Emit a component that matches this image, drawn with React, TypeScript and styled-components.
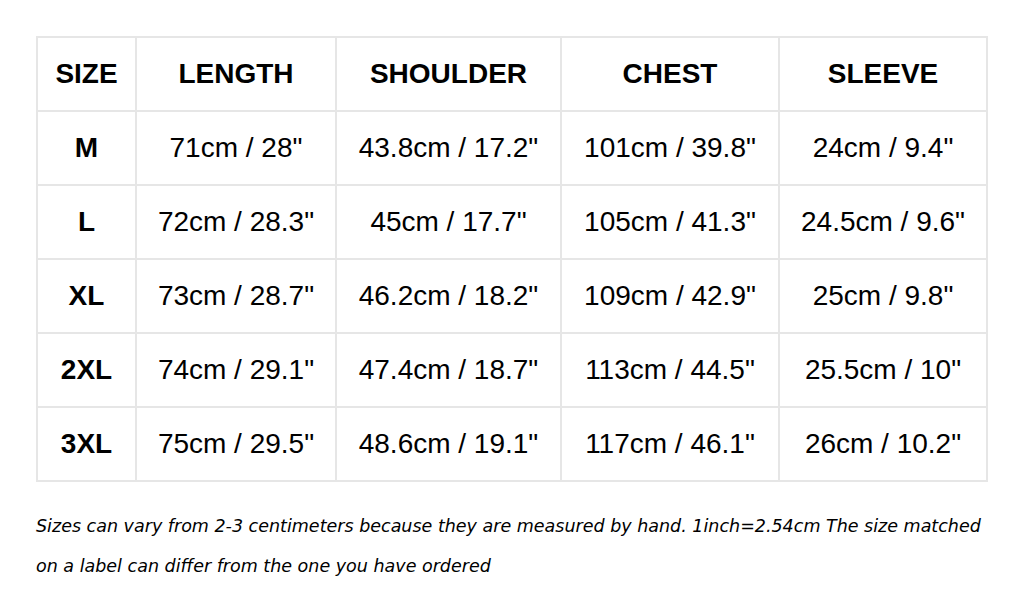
import styled, { createGlobalStyle } from "styled-components";

const GlobalStyle = createGlobalStyle`
  html, body {
    margin: 0;
    padding: 0;
    background: #fff;
  }
`;

const Page = styled.div`
  padding: 36px 34px 0 36px;
  width: 950px;
  font-family: "Liberation Sans", Arial, Helvetica, sans-serif;
  color: #000;
`;

const Table = styled.table`
  width: 950px;
  border-collapse: collapse;
  table-layout: fixed;
  border: 2px solid #e6e6e6;
`;

const Cell = styled.td<{ $head?: boolean }>`
  height: 72px;
  padding: 0;
  border: 2px solid #e6e6e6;
  text-align: center;
  vertical-align: middle;
  font-size: 28px;
  line-height: 32px;
  font-weight: ${({ $head }) => ($head ? 700 : 400)};
  white-space: nowrap;
`;

const Note = styled.p`
  margin: 24px 0 0 0;
  font-family: "DejaVu Sans", Verdana, sans-serif;
  font-style: italic;
  font-size: 17.5px;
  line-height: 40px;
  color: #000;
`;

const widths = [99, 200, 225, 218, 208];

const header = ["SIZE", "LENGTH", "SHOULDER", "CHEST", "SLEEVE"];

const rows = [
  ["M", '71cm / 28"', '43.8cm / 17.2"', '101cm / 39.8"', '24cm / 9.4"'],
  ["L", '72cm / 28.3"', '45cm / 17.7"', '105cm / 41.3"', '24.5cm / 9.6"'],
  ["XL", '73cm / 28.7"', '46.2cm / 18.2"', '109cm / 42.9"', '25cm / 9.8"'],
  ["2XL", '74cm / 29.1"', '47.4cm / 18.7"', '113cm / 44.5"', '25.5cm / 10"'],
  ["3XL", '75cm / 29.5"', '48.6cm / 19.1"', '117cm / 46.1"', '26cm / 10.2"'],
];

export default function App() {
  return (
    <>
      <GlobalStyle />
      <Page>
        <Table>
          <colgroup>
            {widths.map((w, i) => (
              <col key={i} style={{ width: w }} />
            ))}
          </colgroup>
          <tbody>
            <tr>
              {header.map((h) => (
                <Cell key={h} $head>
                  {h}
                </Cell>
              ))}
            </tr>
            {rows.map((row) => (
              <tr key={row[0]}>
                {row.map((v, i) => (
                  <Cell key={i} $head={i === 0}>
                    {v}
                  </Cell>
                ))}
              </tr>
            ))}
          </tbody>
        </Table>
        <Note>
          Sizes can vary from 2-3 centimeters because they are measured by
          hand. 1inch=2.54cm The size matched on a label can differ from the
          one you have ordered
        </Note>
      </Page>
    </>
  );
}
